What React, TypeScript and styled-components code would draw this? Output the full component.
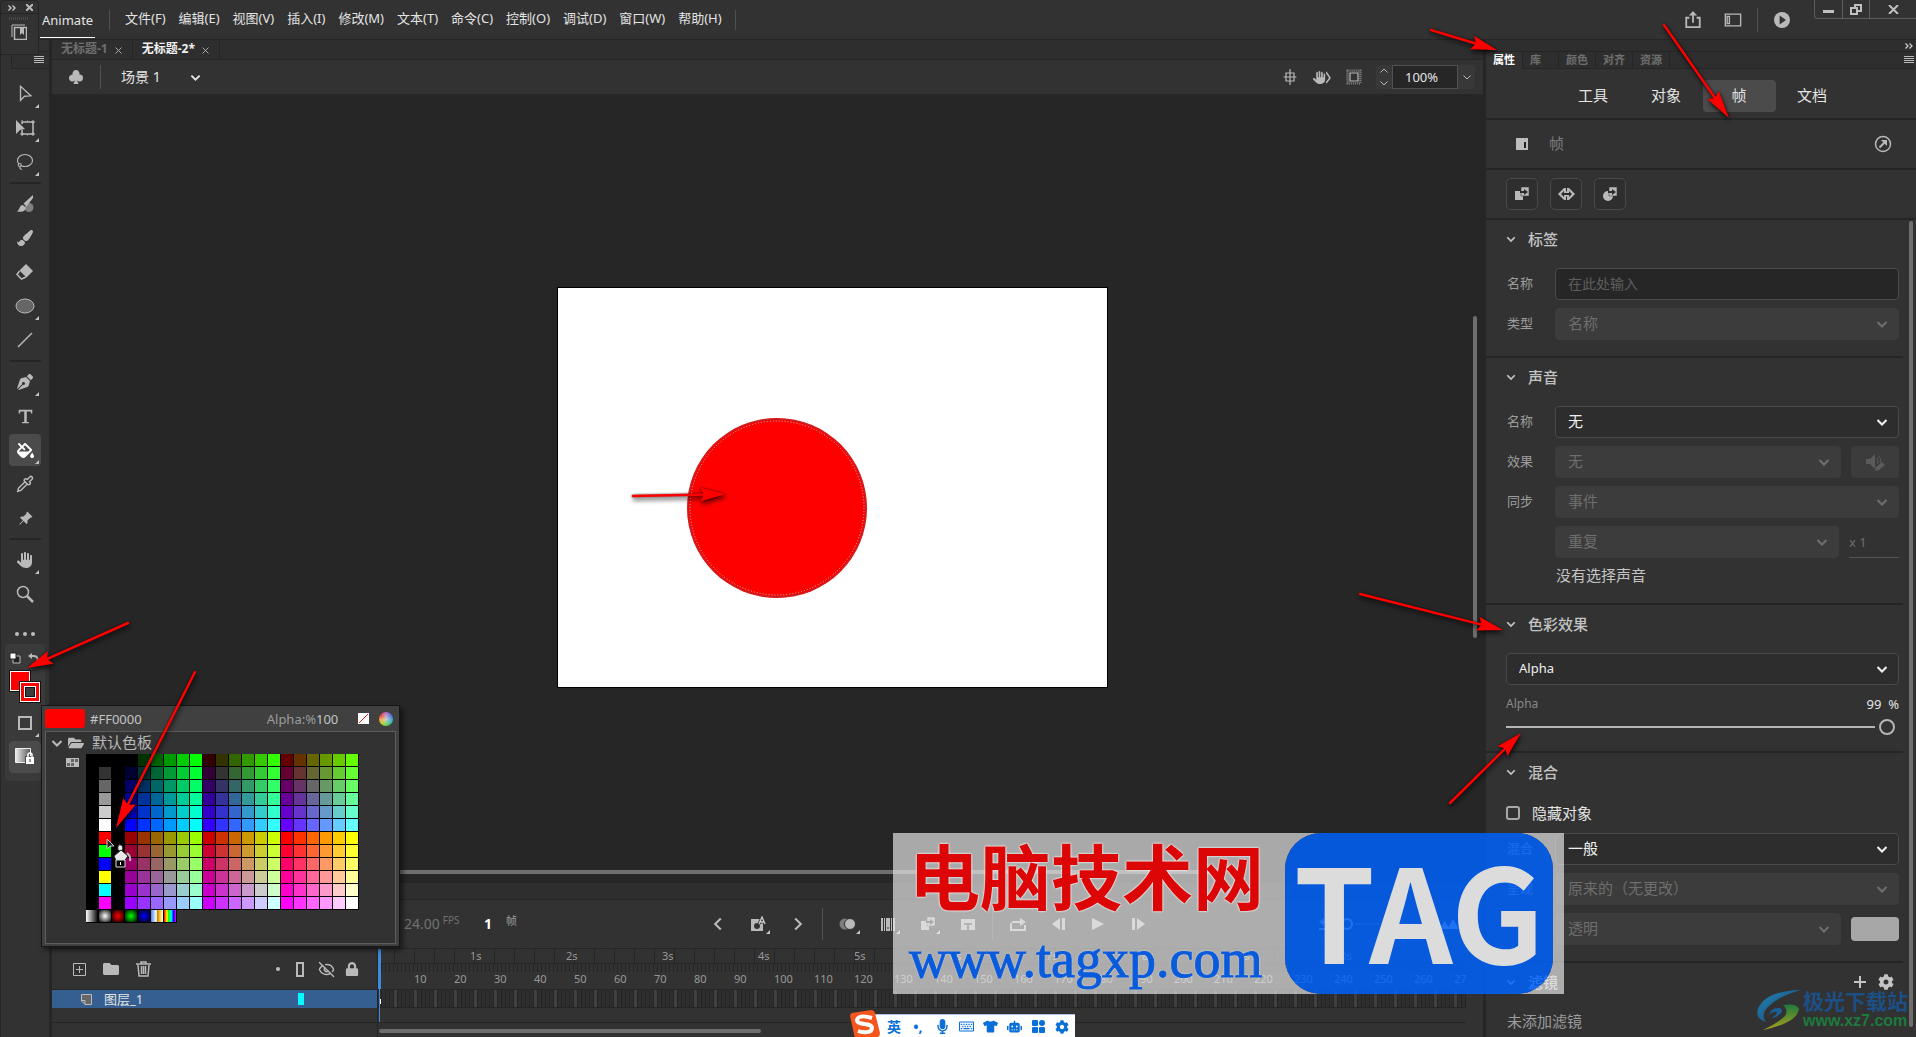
import React from "react";
import styled, { createGlobalStyle, css } from "styled-components";
import { EyeOff, Lasso, Pipette } from "lucide-react";
import {
  FaFolder, FaFolderOpen, FaLock, FaCog, FaPenNib, FaPaintBrush, FaFillDrip,
  FaMicrophone, FaTshirt, FaRegKeyboard, FaRobot,
} from "react-icons/fa";
import { FaHand } from "react-icons/fa6";
import { BsSuitClubFill, BsPinAngleFill } from "react-icons/bs";

const c = {
  panel: "#323232",
  strip: "#2e2e2e",
  dark: "#262626",
  line: "#252525",
  raised: "#3c3c3c",
  active: "#4b4b4b",
  edge: "#4a4a4a",
  icon: "#b9b9b9",
  text: "#e4e4e4",
  soft: "#c4c4c4",
  label: "#9c9c9c",
  dim: "#6e6e6e",
  bar: "#6e6e6e",
  blue: "#3f8bdc",
};

const Global = createGlobalStyle`
  * { box-sizing: border-box; }
  body {
    margin: 0;
    overflow: hidden;
    background: ${c.dark};
    color: ${c.text};
    font: 13px/16px "Noto Sans", "Noto Sans CJK SC", sans-serif;
  }
  button, input, select { font: inherit; color: inherit; margin: 0; }
  button { border: 0; padding: 0; background: none; cursor: pointer; }
  svg { display: block; flex: none; }
`;

/* ---------- shared parts ---------- */

const Shell = styled.div`
  position: relative;
  display: flex;
  flex-direction: column;
  height: 100vh;
  overflow: hidden;
`;

const Body = styled.div`
  display: flex;
  flex: 1;
  gap: 3px;
  min-height: 0;
`;

const IconButton = styled.button<{ $w?: number }>`
  display: flex;
  align-items: center;
  justify-content: center;
  width: ${(p) => p.$w ?? 24}px;
  height: 24px;
  color: ${c.icon};
`;

const Rule = styled.span<{ $h?: number }>`
  width: 1px;
  height: ${(p) => p.$h ?? 22}px;
  background: #505050;
`;

const Spacer = styled.span<{ $w?: number }>`
  flex: ${(p) => (p.$w ? "none" : 1)};
  width: ${(p) => (p.$w ? `${p.$w}px` : "auto")};
`;

type IconProps = { size?: number; children?: React.ReactNode };
const Svg = ({ size = 20, children }: IconProps) => (
  <svg width={size} height={size} viewBox="0 0 20 20" fill="none" stroke="currentColor" strokeWidth="1.5" aria-hidden="true">
    {children}
  </svg>
);

const Chevron = ({ size = 12 }: IconProps) => (
  <Svg size={size}><path d="M2.500 6.500l7.500 7.500 7.500-7.500" strokeWidth="3.500" /></Svg>
);
const ThinChevron = () => (
  <svg width="8" height="5" viewBox="0 0 8 5" fill="none" stroke="currentColor" aria-hidden="true"><path d="M.5 .5L4 4 7.500 .5" /></svg>
);
const MenuLines = () => (
  <svg width="10" height="8" viewBox="0 0 10 8" aria-hidden="true">
    <path d="M0 .5h10M0 2.500h10M0 4.500h10M0 6.500h10" stroke="#bbb" />
  </svg>
);
const DoubleChevron = () => (
  <svg width="8" height="6" viewBox="0 0 8 6" fill="none" stroke="#ccc" strokeWidth="1.300" aria-hidden="true">
    <path d="M.5 .5l2.500 2.500-2.500 2.500M4.500 .5l2.500 2.500-2.500 2.500" />
  </svg>
);
const Cross = () => (
  <svg width="7" height="7" viewBox="0 0 7 7" stroke="#aaa" aria-hidden="true"><path d="M.5 .5l6 6M6.500 .5l-6 6" /></svg>
);

/* ---------- title bar ---------- */

const TopBar = styled.header`
  display: flex;
  align-items: center;
  height: 40px;
  padding-left: 40px;
  background: ${c.panel};
  border-bottom: 1px solid ${c.line};
`;

const AppName = styled.span`
  width: 55px;
  height: 32px;
  margin-top: 4px;
  padding: 6px 2px 0;
  border-bottom: 1px solid #fff;
  line-height: 16px;
  font-size: 13px;
`;

const Menu = styled.nav`
  display: flex;
  gap: 13px;
  padding: 0 13px 4px 15px;
`;

const MenuItem = styled.button`
  font-size: 13px;
  line-height: 20px;
  white-space: nowrap;
`;

const WindowButtons = styled.div`
  display: flex;
  align-self: flex-start;
  width: 102px;
  height: 19px;
  border: solid #5c5c5c;
  border-width: 0 0 1px 1px;
  border-radius: 0 0 0 4px;
`;

const WindowButton = styled.button<{ $wide?: boolean }>`
  display: flex;
  align-items: center;
  justify-content: center;
  width: ${(p) => (p.$wide ? 47 : 27)}px;
  height: 18px;
  color: #c0c0c0;
  & + & { border-left: 1px solid #5c5c5c; }
`;

const menus = ["文件(F)", "编辑(E)", "视图(V)", "插入(I)", "修改(M)", "文本(T)", "命令(C)", "控制(O)", "调试(D)", "窗口(W)", "帮助(H)"];

const TitleBar = () => (
  <TopBar>
    <AppName>Animate</AppName>
    <Spacer $w={14} />
    <Rule $h={20} />
    <Menu>{menus.map((m) => <MenuItem key={m}>{m}</MenuItem>)}</Menu>
    <Rule $h={20} />
    <Spacer />
    <IconButton aria-label="共享" $w={40}>
      <Svg size={18}><path d="M6 7.500H2.500V18h15V7.500H14M10 13V2.500" strokeWidth="2" /><path d="M5.500 5L10 0l4.500 5z" fill="currentColor" stroke="none" /></Svg>
    </IconButton>
    <IconButton aria-label="工作区" $w={40}>
      <Svg size={18}><path d="M1.500 3.500h17v13h-17z" /><path d="M3.500 6h2.500v8H3.500z" /></Svg>
    </IconButton>
    <Spacer $w={4} />
    <Rule $h={24} />
    <IconButton aria-label="测试影片" $w={48}>
      <Svg size={16}><circle cx="10" cy="10" r="10" fill="currentColor" stroke="none" /><path d="M7 4.500l8 5.500-8 5.500z" fill={c.panel} stroke="none" /></Svg>
    </IconButton>
    <Spacer $w={8} />
    <WindowButtons>
      <WindowButton aria-label="最小化"><svg width="11" height="9"><path d="M0 5h11v3H0z" fill="currentColor" /></svg></WindowButton>
      <WindowButton aria-label="还原">
        <svg width="12" height="11" fill="none" stroke="currentColor" strokeWidth="2"><path d="M1 4h6v6H1zM5 4V1h6v6H7" /></svg>
      </WindowButton>
      <WindowButton aria-label="关闭" $wide><svg width="11" height="9" stroke="currentColor" strokeWidth="2"><path d="M1 0l9 9M10 0L1 9" /></svg></WindowButton>
    </WindowButtons>
  </TopBar>
);

/* ---------- floating mini panel ---------- */

const MiniPanel = styled.aside`
  position: absolute;
  top: 0;
  left: 0;
  width: 39px;
  height: 55px;
  background: ${c.panel};
  border: 1px solid ${c.line};
  border-radius: 4px 4px 0 0;
`;

const MiniHead = styled.div`
  display: flex;
  align-items: center;
  justify-content: space-between;
  height: 13px;
  padding: 1px 5px 0 7px;
  border-bottom: 1px solid ${c.line};
`;

const MiniBody = styled.div`
  display: flex;
  flex-direction: column;
  align-items: center;
  padding: 3px 2px 0 0;
`;

const Grip = styled.span`
  width: 20px;
  height: 3px;
  background: repeating-linear-gradient(90deg, #4a4a4a 0 1px, transparent 1px 2px);
`;

/* ---------- tools ---------- */

const Tools = styled.aside`
  display: flex;
  flex-direction: column;
  align-items: center;
  width: 49px;
  background: ${c.panel};
  border-left: 1px solid ${c.line};
`;

const ToolsHead = styled.div`
  display: flex;
  align-items: center;
  justify-content: flex-end;
  align-self: stretch;
  height: 18px;
  margin: 11px 0 8px 10px;
  padding-right: 5px;
  background: #303030;
  border: solid ${c.line};
  border-width: 1px 0 1px 1px;
`;

const Tool = styled.button<{ $on?: boolean }>`
  position: relative;
  display: flex;
  align-items: center;
  justify-content: center;
  width: 32px;
  height: 32px;
  margin: 1px 0;
  border-radius: 4px;
  color: ${(p) => (p.$on ? "#fff" : c.icon)};
  background: ${(p) => (p.$on ? c.active : "transparent")};
`;

const Corner = styled.span`
  position: absolute;
  right: 2px;
  bottom: 2px;
  border: 2px solid;
  border-color: transparent #c4c4c4 #c4c4c4 transparent;
`;

const ToolRule = styled.span`
  width: 31px;
  height: 2px;
  margin: 3px 0;
  background: ${c.line};
`;

const MoreTools = styled.button`
  display: flex;
  gap: 4px;
  margin: 21px 0 8px;
`;

const Dot = styled.i`
  width: 4px;
  height: 4px;
  border-radius: 50%;
  background: #bdbdbd;
`;

const ColorBox = styled.div`
  display: flex;
  flex-direction: column;
  align-items: center;
  width: 40px;
  height: 137px;
  border-radius: 4px;
  background: #3a3a3a;
`;

const SwapRow = styled.div`
  display: flex;
  justify-content: space-between;
  align-items: center;
  align-self: stretch;
  height: 26px;
  padding: 2px 6px 0 4px;
  color: ${c.icon};
`;

const Chips = styled.div`
  position: relative;
  width: 32px;
  height: 36px;
`;

const Chip = styled.button<{ $stroke?: boolean }>`
  position: absolute;
  left: ${(p) => (p.$stroke ? 10 : 0)}px;
  top: ${(p) => (p.$stroke ? 11 : 0)}px;
  width: 22px;
  height: 22px;
  background: #f00;
  border: 1px solid #111;
  box-shadow: inset 0 0 0 1px #fff;
  ${(p) => p.$stroke && css`
    &::after {
      content: "";
      position: absolute;
      inset: 5px;
      background: ${c.raised};
      border: 1px solid #111;
      box-shadow: 0 0 0 1px #fff;
    }
  `}
`;

const toolGroups: { name: string; more?: boolean; on?: boolean; icon: React.ReactNode }[][] = [
  [
    { name: "选择", more: true, icon: <Svg size={18}><path d="M5 1.500v15.500l4.500-4.500 7-.5z" /></Svg> },
    {
      name: "任意变形", more: true,
      icon: <Svg><path d="M1 2v14l4-4 5-1z" fill="currentColor" stroke="none" /><path d="M7 4h11v12H7v-4M7 4v2" /><path d="M6 3h2M12 3h1M17 3h2v2h-2zM18 10h1M17 15h2v2h-2zM12 17h1M6 15h2v2H6z" strokeWidth="1" /></Svg>,
    },
    { name: "套索", more: true, icon: <Lasso size={18} strokeWidth={1.500} /> },
  ],
  [
    { name: "流畅画笔", icon: <Svg><circle cx="14" cy="13.500" r="4.500" fill="#808080" stroke="none" /><path d="M18 1L8.500 9.500l3 3L18 4zM8 11c-4 0-3 5-6 6.500 5 1 9-.5 8.500-4z" fill="currentColor" stroke="none" /></Svg> },
    { name: "画笔", icon: <FaPaintBrush size={16} /> },
    { name: "橡皮擦", icon: <Svg><path d="M11 2l7 7-6.500 6.500-7-7z" fill="currentColor" stroke="none" /><path d="M4.500 9L2 12.500l4.500 4.500 4.500-2" /></Svg> },
    { name: "椭圆", more: true, icon: <Svg><ellipse cx="10" cy="10" rx="9" ry="7" fill="#666" strokeWidth="1" /></Svg> },
    { name: "线条", icon: <Svg><path d="M3 17L17 3" /></Svg> },
  ],
  [
    { name: "钢笔", more: true, icon: <FaPenNib size={16} /> },
    { name: "文本", icon: <Svg size={17}><path d="M2 2h16v4.500h-1.500L16 4h-4.500v12.500H14V18H6v-1.500h2.500V4H4l-.5 2.500H2z" fill="currentColor" stroke="none" /></Svg> },
    { name: "颜料桶", more: true, on: true, icon: <FaFillDrip size={17} /> },
    { name: "滴管", icon: <Pipette size={18} strokeWidth={2} /> },
    { name: "资源变形", icon: <BsPinAngleFill size={15} /> },
  ],
  [
    { name: "手形", more: true, icon: <FaHand size={16} /> },
    { name: "缩放", icon: <Svg><circle cx="8" cy="8" r="5.500" /><path d="M12 12l6 6" strokeWidth="2.500" /></Svg> },
  ],
];

const ToolPanel = () => (
  <Tools>
    <ToolsHead><MenuLines /></ToolsHead>
    {toolGroups.map((group, i) => (
      <React.Fragment key={i}>
        {i > 0 && <ToolRule />}
        {group.map((t) => (
          <Tool key={t.name} aria-label={t.name} $on={t.on}>{t.icon}{t.more && <Corner />}</Tool>
        ))}
      </React.Fragment>
    ))}
    <MoreTools aria-label="更多工具"><Dot /><Dot /><Dot /></MoreTools>
    <ColorBox>
      <SwapRow>
        <svg width="12" height="12"><path d="M4 4h7v7H4z" fill="#222" stroke="#bbb" /><path d="M1 1h6v6H1z" fill="#fff" stroke="#222" /></svg>
        <svg width="11" height="10" fill="none" stroke="currentColor" strokeWidth="2"><path d="M2 3h4q4 0 4 6" /><path d="M4 0v6L0 3z" fill="currentColor" stroke="none" /></svg>
      </SwapRow>
      <Chips><Chip aria-label="填充颜色" /><Chip $stroke aria-label="笔触颜色" /></Chips>
      <Tool aria-label="对象绘制"><svg width="14" height="14" fill="none" stroke="currentColor" strokeWidth="2"><path d="M1 1h12v12H1z" /></svg><Corner /></Tool>
      <Tool aria-label="锁定填充" $on>
        <svg width="20" height="18">
          <defs><linearGradient id="lk"><stop offset="0" stopColor="#eee" /><stop offset="1" stopColor="#555" /></linearGradient></defs>
          <path d="M.5 .5h15v14H.5z" fill="url(#lk)" stroke="#eee" />
          <path d="M10 8h10v9H10z" fill={c.active} />
          <path d="M13 9V7a2 2 0 014 0v2" fill="none" stroke="#fff" strokeWidth="1.500" /><path d="M11 9h8v7h-8z" fill="#fff" /><path d="M14.500 11h1v3h-1z" fill="#333" />
        </svg>
      </Tool>
    </ColorBox>
  </Tools>
);

/* ---------- document area ---------- */

const Center = styled.main`
  display: flex;
  flex: 1;
  flex-direction: column;
  min-width: 0;
`;

const DocTabs = styled.div`
  display: flex;
  height: 20px;
  background: ${c.strip};
  border-bottom: 1px solid ${c.line};
`;

const DocTab = styled.div<{ $on?: boolean }>`
  display: flex;
  align-items: center;
  gap: 7px;
  padding: 0 10px 2px 9px;
  border-right: 1px solid ${c.line};
  font-size: 12px;
  font-weight: 700;
  color: ${(p) => (p.$on ? "#f0f0f0" : c.dim)};
`;

const TabClose = styled.button`
  padding-top: 3px;
`;

const DocBar = styled.div`
  display: flex;
  align-items: center;
  height: 34px;
  padding: 0 8px 0 12px;
  background: ${c.panel};
`;

const SceneSelect = styled.button`
  display: flex;
  align-items: center;
  justify-content: space-between;
  width: 80px;
  font-size: 14px;
  line-height: 20px;
`;

const Zoom = styled.div`
  display: flex;
  align-items: center;
  height: 24px;
  border-radius: 3px;
  background: #383838;
`;

const Stepper = styled.button`
  display: flex;
  flex-direction: column;
  gap: 8px;
  padding: 0 4px;
  color: ${c.icon};
  svg:first-child { transform: rotate(180deg); }
`;

const ZoomInput = styled.input`
  width: 66px;
  height: 24px;
  padding: 0 12px;
  background: ${c.dark};
  border: 1px solid #505050;
  font-size: 13px;
`;

const Workspace = styled.section`
  position: relative;
  flex: 1;
  min-height: 0;
  background: ${c.dark};
`;

const Canvas = styled.div`
  position: absolute;
  left: 505px;
  top: 193px;
  width: 551px;
  height: 401px;
  background: #fff;
  border: 1px solid #000;
`;

const Disc = styled.svg`
  position: absolute;
  left: 129px;
  top: 130px;
`;

const VBar = styled.span`
  position: absolute;
  right: 6px;
  top: 222px;
  width: 4px;
  height: 322px;
  border-radius: 2px;
  background: ${c.bar};
`;

const HBar = styled.span`
  position: absolute;
  left: 300px;
  right: 257px;
  bottom: 9px;
  height: 4px;
  border-radius: 2px;
  background: ${c.bar};
`;

/* ---------- timeline ---------- */

const TimelineBox = styled.section`
  display: flex;
  flex-direction: column;
  height: 154px;
  background: ${c.panel};
`;

const TimelineTabs = styled.div`
  display: flex;
  align-items: center;
  justify-content: flex-end;
  height: 17px;
  padding-right: 5px;
  background: ${c.strip};
  border-bottom: 1px solid ${c.line};
`;

const Controls = styled.div`
  display: flex;
  align-items: center;
  height: 49px;
  padding-left: 352px;
  border-bottom: 1px solid ${c.line};
  color: ${c.icon};
`;

const Fps = styled.span`
  display: flex;
  gap: 3px;
  width: 80px;
  color: #707070;
  font-size: 14px;
  line-height: 20px;
  sup { font-size: 10px; line-height: 12px; }
`;

const FrameNo = styled.strong`
  width: 22px;
  font-size: 14px;
  color: #fff;
`;

const FrameUnit = styled.span`
  width: 192px;
  padding-bottom: 6px;
  font-size: 11px;
  color: ${c.label};
`;

const Slot = styled.button<{ $w?: number }>`
  position: relative;
  display: flex;
  align-items: center;
  justify-content: center;
  width: ${(p) => p.$w ?? 40}px;
  height: 24px;
  color: ${c.icon};
`;

const SlotCorner = styled(Corner)`
  right: 8px;
`;

const Lower = styled.div`
  display: flex;
  flex: 1;
  min-height: 0;
`;

const Layers = styled.div`
  width: 326px;
  border-right: 1px solid ${c.line};
`;

const LayerTools = styled.div`
  display: flex;
  align-items: center;
  height: 41px;
  padding: 0 12px 0 11px;
  border-bottom: 1px solid ${c.line};
`;

const Layer = styled.div`
  display: flex;
  align-items: center;
  height: 18px;
  padding: 0 73px 0 29px;
  background: #345f90;
  font-size: 13px;
`;

const LayerName = styled.span`
  flex: 1;
  padding-left: 12px;
`;

const LayerColor = styled.span`
  width: 6px;
  height: 12px;
  background: #0ff;
`;

const LayerVoid = styled.div`
  height: 15px;
  border-bottom: 1px solid ${c.line};
`;

const Frames = styled.div`
  position: relative;
  flex: 1;
  min-width: 0;
  margin-right: 17px;
`;

const tick = (n: number) => `repeating-linear-gradient(90deg, transparent 0 ${n - 1}px, ${c.line} ${n - 1}px ${n}px)`;

const Seconds = styled.div`
  display: flex;
  height: 15px;
  padding-left: 92px;
  overflow: hidden;
  border-bottom: 1px solid ${c.line};
  background: ${tick(20)} -3px 0;
  span { flex: none; width: 96px; font-size: 11px; line-height: 14px; color: #989898; }
`;

const Numbers = styled.div`
  display: flex;
  height: 26px;
  padding: 7px 0 0 36px;
  overflow: hidden;
  border-bottom: 1px solid ${c.line};
  background: ${tick(4)} 0 0 / 100% 8px no-repeat;
  span { flex: none; width: 40px; font-size: 11px; line-height: 16px; color: #989898; }
`;

const FrameCells = styled.div`
  height: 18px;
  background:
    ${tick(4)},
    repeating-linear-gradient(90deg, #2e2e2e 0 16px, #404040 16px 20px);
  border-bottom: 1px solid ${c.line};
`;

const KeyFrame = styled.span`
  display: block;
  width: 4px;
  height: 17px;
  background: linear-gradient(#fff, #fff) 1px 9px / 2px 5px no-repeat;
`;

const Playhead = styled.span`
  position: absolute;
  left: 0;
  top: 0;
  width: 3px;
  height: 40px;
  background: ${c.blue};
  &::after {
    content: "";
    position: absolute;
    left: 1px;
    top: 40px;
    width: 1px;
    height: 33px;
    background: ${c.blue};
  }
`;

const FrameScroll = styled.span`
  display: block;
  width: 382px;
  height: 4px;
  margin: 6px 0 0 1px;
  border-radius: 2px;
  background: ${c.bar};
`;

const seconds = Array.from({ length: 11 }, (_, i) => i + 1);
const numbers = Array.from({ length: 27 }, (_, i) => (i + 1) * 10);

const TweenIcon = () => (
  <svg width="15" height="14"><path d="M0 4h8v9H0z" fill="currentColor" /><path d="M6 0h8v9H6z" fill="currentColor" stroke="#2c2c2c" strokeWidth=".5" /><path d="M5 4h4V2l4 3-4 3V6H5z" fill="#2c2c2c" /></svg>
);

const Timeline = () => (
  <TimelineBox>
    <TimelineTabs><MenuLines /></TimelineTabs>
    <Controls>
      <Fps>24.00<sup>FPS</sup></Fps>
      <FrameNo>1</FrameNo>
      <FrameUnit>帧</FrameUnit>
      <Slot aria-label="上一个"><Svg size={14}><path d="M14 2l-8 8 8 8" strokeWidth="3" /></Svg></Slot>
      <Slot aria-label="关键帧">
        <svg width="17" height="16"><path d="M1 3h12v12H1z" fill="currentColor" /><circle cx="7" cy="10" r="3" fill="#333" /><path d="M9 8l3-7 3 7M10 6h4" fill="none" stroke="#333" strokeWidth="3" /><path d="M9 8l3-7 3 7M10 6h4" fill="none" stroke="#ccc" strokeWidth="1.300" /></svg>
        <SlotCorner />
      </Slot>
      <Slot aria-label="下一个"><Svg size={14}><path d="M6 2l8 8-8 8" strokeWidth="3" /></Svg></Slot>
      <Spacer $w={4} />
      <Rule $h={32} />
      <Spacer $w={5} />
      <Slot aria-label="绘图纸外观"><svg width="18" height="12"><circle cx="6" cy="6" r="5.500" fill="#7d7d7d" /><circle cx="11" cy="6" r="5.500" fill="currentColor" stroke="#333" /></svg><SlotCorner /></Slot>
      <Slot aria-label="编辑多个帧"><svg width="14" height="13" fill="currentColor"><path d="M0 0h2v13H0zM3 0h1v13H3zM5 0h4v13H5zM10 0h1v13h-1zM12 0h2v13h-2z" /><path d="M6.500 9h1v2h-1z" fill="#333" /></svg><SlotCorner /></Slot>
      <Slot aria-label="创建传统补间"><TweenIcon /><SlotCorner /></Slot>
      <Slot aria-label="插入帧组"><svg width="14" height="11"><path d="M0 0h14v11H0z" fill="currentColor" /><path d="M3 4h8v2H8v5H6V6H3z" fill="#444" /></svg></Slot>
      <Spacer $w={4} />
      <Rule $h={32} />
      <Spacer $w={5} />
      <Slot aria-label="循环"><svg width="17" height="13" fill="none" stroke="currentColor" strokeWidth="2"><path d="M1 5v7h14V7M2 4h9" /><path d="M10 0l6 4-6 4z" fill="currentColor" stroke="none" /></svg></Slot>
      <Slot aria-label="后退一帧"><svg width="13" height="12" fill="currentColor"><path d="M8 0v12L0 6zM10 0h3v12h-3z" /></svg></Slot>
      <Slot aria-label="播放"><svg width="12" height="12" fill="currentColor"><path d="M0 0l12 6L0 12z" /></svg></Slot>
      <Slot aria-label="前进一帧"><svg width="13" height="12" fill="currentColor"><path d="M5 0v12l8-6zM0 0h3v12H0z" /></svg></Slot>
      <Spacer />
      <Slot aria-label="重置" $w={24}><svg width="16" height="12" fill="none" stroke="currentColor" strokeWidth="2"><path d="M3 4h6q4 0 4 5M0 11h16" /><path d="M5 0v8L0 4z" fill="currentColor" stroke="none" /></svg></Slot>
      <Slot aria-label="缩放时间轴" $w={124}><svg width="120" height="12" fill="none" stroke="#bbb"><circle cx="6" cy="6" r="5" strokeWidth="2" /><path d="M14 6h82" stroke="#555" strokeWidth="2" /><path d="M98 11l6-8 4 8zM106 11l6-10 6 10z" fill="#bbb" stroke="none" /></svg></Slot>
      <Spacer $w={20} />
    </Controls>
    <Lower>
      <Layers>
        <LayerTools>
          <IconButton aria-label="新建图层" $w={32}><svg width="13" height="13" fill="none" stroke="currentColor"><path d="M.5 .5h12v12H.5zM6.500 3v7M3 6.500h7" /></svg></IconButton>
          <IconButton aria-label="新建文件夹" $w={32}><FaFolder size={16} /></IconButton>
          <IconButton aria-label="删除" $w={32}><svg width="15" height="16" fill="none" stroke="currentColor" strokeWidth="1.500"><path d="M0 3h15M5 3V1h5v2M2 4l1 11h9l1-11M5.500 5v8M7.500 5v8M9.500 5v8" /></svg></IconButton>
          <Spacer />
          <Dot />
          <Spacer $w={7} />
          <IconButton aria-label="轮廓" $w={26}><svg width="8" height="15" fill="none" stroke="currentColor" strokeWidth="2"><path d="M1 1h6v13H1z" /></svg></IconButton>
          <IconButton aria-label="隐藏" $w={26}><EyeOff size={17} /></IconButton>
          <IconButton aria-label="锁定" $w={26}><FaLock size={14} /></IconButton>
        </LayerTools>
        <Layer>
          <svg width="11" height="11"><path d="M.5 .5h10v10H4L.5 7z" fill="#666" stroke="#bbb" /><path d="M.5 6.500H4v4" fill="none" stroke="#bbb" /></svg>
          <LayerName>图层_1</LayerName>
          <LayerColor />
        </Layer>
        <LayerVoid />
      </Layers>
      <Frames>
        <Seconds>{seconds.map((s) => <span key={s}>{s}s</span>)}</Seconds>
        <Numbers>{numbers.map((n) => <span key={n}>{n}</span>)}</Numbers>
        <FrameCells><KeyFrame /></FrameCells>
        <LayerVoid />
        <FrameScroll />
        <Playhead />
      </Frames>
    </Lower>
  </TimelineBox>
);

/* ---------- properties ---------- */

const PropsPanel = styled.aside`
  display: flex;
  flex-direction: column;
  width: 430px;
  background: ${c.panel};
  overflow: hidden;
`;

const Collapse = styled.div`
  display: flex;
  flex: none;
  align-items: center;
  justify-content: flex-end;
  height: 12px;
  padding-right: 3px;
  background: ${c.strip};
  border-bottom: 1px solid ${c.line};
`;

const PanelTabs = styled.div`
  display: flex;
  flex: none;
  align-items: stretch;
  height: 17px;
  padding-right: 2px;
`;

const PanelTab = styled.button<{ $on?: boolean }>`
  padding: 0 7px;
  font-size: 11px;
  line-height: 14px;
  font-weight: 700;
  text-align: left;
  min-width: 36px;
  color: ${(p) => (p.$on ? "#fff" : c.dim)};
  background: ${(p) => (p.$on ? c.panel : c.strip)};
  border-right: 1px solid ${c.line};
  border-bottom: 1px solid ${(p) => (p.$on ? c.panel : c.line)};
`;

const PanelTabRest = styled.div`
  display: flex;
  flex: 1;
  align-items: center;
  justify-content: flex-end;
  background: ${c.strip};
  border-bottom: 1px solid ${c.line};
`;

const Modes = styled.div`
  display: flex;
  flex: none;
  justify-content: center;
  height: 51px;
  padding: 11px 0 0 3px;
  border-bottom: 2px solid ${c.line};
`;

const Mode = styled.button<{ $on?: boolean }>`
  width: 73px;
  height: 32px;
  font-size: 15px;
  line-height: 28px;
  padding-bottom: 3px;
  border-radius: 4px;
  background: ${(p) => (p.$on ? c.active : "transparent")};
`;

const FrameHead = styled.div`
  display: flex;
  flex: none;
  align-items: center;
  height: 50px;
  padding: 0 24px 0 30px;
  gap: 21px;
  border-bottom: 2px solid ${c.line};
  font-size: 15px;
  color: #7c7c7c;
`;

const FrameTitle = styled.span`
  padding-bottom: 2px;
`;

const ActionRow = styled.div`
  display: flex;
  flex: none;
  gap: 12px;
  height: 50px;
  padding: 8px 20px;
  border-bottom: 2px solid ${c.line};
`;

const Action = styled.button`
  display: flex;
  align-items: center;
  justify-content: center;
  width: 32px;
  height: 32px;
  border: 1px solid ${c.edge};
  border-radius: 5px;
  background: ${c.strip};
  color: ${c.icon};
`;

const Sections = styled.div`
  display: flex;
  flex: 1;
  min-height: 0;
  overflow: hidden;
`;

const SectionList = styled.div`
  flex: 1;
`;

const ScrollBar = styled.span`
  width: 4px;
  height: 806px;
  margin: 1px 3px 0 6px;
  border-radius: 2px;
  background: ${c.bar};
`;

const Section = styled.section`
  display: flex;
  flex-direction: column;
  gap: 8px;
  padding: 0 4px 16px 20px;
  border-bottom: 2px solid ${c.line};
`;

const SectionHead = styled.h2`
  display: flex;
  align-items: center;
  gap: 12px;
  height: 38px;
  margin: 0 0 2px;
  padding-right: 5px;
  font-size: 15px;
  font-weight: 500;
  color: ${c.soft};
`;

const SectionTitle = styled.span`
  flex: 1;
`;

const Row = styled.div`
  display: flex;
  align-items: center;
  gap: 10px;
`;

const Label = styled.label`
  width: 39px;
  padding: 0 0 3px 1px;
  font-size: 13px;
  color: ${c.label};
`;

const field = css`
  width: 100%;
  height: 32px;
  padding: 0 12px 2px;
  border: 1px solid ${c.edge};
  border-radius: 4px;
  font-size: 15px;
  outline: 0;
`;

const Text = styled.input`
  ${field}
  flex: 1;
  background: ${c.dark};
  font-size: 14px;
  &::placeholder { color: #5e5e5e; opacity: 1; }
`;

const SelectBox = styled.div<{ $off?: boolean }>`
  position: relative;
  flex: 1;
  color: ${(p) => (p.$off ? c.dim : "#f0f0f0")};
  svg { position: absolute; right: 11px; top: 10px; pointer-events: none; }
`;

const Select = styled.select<{ $latin?: boolean }>`
  ${field}
  appearance: none;
  opacity: 1;
  font-size: ${(p) => (p.$latin ? 13 : 15)}px;
  background: #2d2d2d;
  &:disabled { color: ${c.dim}; background: ${c.raised}; border-color: ${c.raised}; opacity: 1; }
`;

const Pick = ({ id, value, off, latin }: { id: string; value: string; off?: boolean; latin?: boolean }) => (
  <SelectBox $off={off}>
    <Select id={id} disabled={off} $latin={latin} aria-label={value}><option>{value}</option></Select>
    <Chevron size={12} />
  </SelectBox>
);

const SoundEdit = styled.button`
  display: flex;
  align-items: center;
  justify-content: center;
  width: 48px;
  height: 32px;
  border-radius: 4px;
  background: ${c.raised};
  color: #5b5b5b;
`;

const Repeat = styled.input`
  width: 50px;
  height: 32px;
  padding: 0;
  border: 0;
  border-bottom: 1px solid #555;
  background: none;
  color: ${c.dim};
  font-size: 13px;
`;

const Note = styled.p`
  margin: 0 0 3px 50px;
  font-size: 15px;
  line-height: 18px;
  color: ${c.soft};
`;

const SliderHead = styled.div`
  display: flex;
  justify-content: space-between;
  height: 18px;
  padding-top: 3px;
  font-size: 12px;
  color: #888;
  output { color: ${c.text}; font-size: 13px; }
`;

const Slider = styled.input`
  appearance: none;
  width: 100%;
  height: 16px;
  margin: 0;
  background: linear-gradient(#b5b5b5, #b5b5b5) 0 7px / calc(100% - 24px) 2px no-repeat;
  &::-webkit-slider-thumb {
    appearance: none;
    width: 16px;
    height: 16px;
    border: 2px solid #b5b5b5;
    border-radius: 50%;
    background: ${c.panel};
  }
`;

const CheckRow = styled.label`
  display: flex;
  align-items: center;
  gap: 12px;
  height: 24px;
  font-size: 15px;
  color: ${c.text};
`;

const Check = styled.input`
  appearance: none;
  width: 14px;
  height: 14px;
  border: 2px solid #a8a8a8;
  border-radius: 3px;
`;

const Swatch = styled.button`
  width: 48px;
  height: 24px;
  border-radius: 4px;
  background: #a7a7a7;
`;

const Empty = styled.p`
  margin: 0;
  padding-left: 1px;
  font-size: 15px;
  line-height: 20px;
  color: ${c.label};
`;

const Head = ({ title, children }: { title: string; children?: React.ReactNode }) => (
  <SectionHead><Chevron size={10} /><SectionTitle>{title}</SectionTitle>{children}</SectionHead>
);

const Properties = () => (
  <PropsPanel>
    <Collapse><DoubleChevron /></Collapse>
    <PanelTabs>
      {["属性", "库", "颜色", "对齐", "资源"].map((t, i) => <PanelTab key={t} $on={i === 0}>{t}</PanelTab>)}
      <PanelTabRest><MenuLines /></PanelTabRest>
    </PanelTabs>
    <Modes>
      {["工具", "对象", "帧", "文档"].map((t) => <Mode key={t} $on={t === "帧"}>{t}</Mode>)}
    </Modes>
    <FrameHead>
      <svg width="12" height="12"><path d="M0 0h12v12H0z" fill="#bdbdbd" /><path d="M8 4h2v6H8z" fill="#222" /></svg>
      <FrameTitle>帧</FrameTitle>
      <Spacer />
      <svg width="18" height="18" fill="none" stroke="#b9b9b9" strokeWidth="1.500"><circle cx="9" cy="9" r="7.500" /><path d="M5.500 12.500l6-6" strokeWidth="2" /><path d="M7 5h6v6z" fill="#b9b9b9" stroke="none" /></svg>
    </FrameHead>
    <ActionRow>
      <Action aria-label="创建传统补间"><TweenIcon /></Action>
      <Action aria-label="创建补间动画"><svg width="17" height="12"><path d="M6 0h5l6 6-6 6H6L0 6z" fill="currentColor" /><path d="M8.500 0v3.500M8.500 8.500V12" stroke="#2c2c2c" /><path d="M3 6l3-3v2h5V3l3 3-3 3V7H6v2z" fill="#2c2c2c" /></svg></Action>
      <Action aria-label="创建形状补间"><svg width="15" height="14"><circle cx="5" cy="9" r="5" fill="currentColor" /><path d="M6 0h8v9H6z" fill="currentColor" stroke="#2c2c2c" strokeWidth=".5" /><path d="M5 4h4V2l4 3-4 3V6H5z" fill="#2c2c2c" /></svg></Action>
    </ActionRow>
    <Sections>
      <SectionList>
        <Section>
          <Head title="标签" />
          <Row><Label htmlFor="name">名称</Label><Text id="name" placeholder="在此处输入" /></Row>
          <Row><Label htmlFor="type">类型</Label><Pick id="type" value="名称" off /></Row>
        </Section>
        <Section>
          <Head title="声音" />
          <Row><Label htmlFor="snd">名称</Label><Pick id="snd" value="无" /></Row>
          <Row>
            <Label htmlFor="fx">效果</Label><Pick id="fx" value="无" off />
            <SoundEdit aria-label="编辑声音封套" disabled>
              <svg width="19" height="17" fill="currentColor"><path d="M0 5h4l5-5v15L4 10H0z" /><path d="M11 4q2 3 0 6M13 2q3 4 1 7" fill="none" stroke="currentColor" /><path d="M16 8l3 3-6 5-4 1 1-4z" /></svg>
            </SoundEdit>
          </Row>
          <Row><Label htmlFor="sync">同步</Label><Pick id="sync" value="事件" off /></Row>
          <Row><Label htmlFor="rep" aria-label="重复" /><Pick id="rep" value="重复" off /><Repeat aria-label="次数" defaultValue="x 1" disabled /></Row>
          <Note>没有选择声音</Note>
        </Section>
        <Section>
          <Head title="色彩效果" />
          <Pick id="effect" value="Alpha" latin />
          <SliderHead><label htmlFor="alpha">Alpha</label><output htmlFor="alpha">99 &nbsp;%</output></SliderHead>
          <Slider id="alpha" type="range" min="0" max="100" defaultValue="99" />
        </Section>
        <Section>
          <Head title="混合" />
          <CheckRow><Check type="checkbox" />隐藏对象</CheckRow>
          <Row><Label htmlFor="blend">混合</Label><Pick id="blend" value="一般" /></Row>
          <Row><Label htmlFor="render">呈现</Label><Pick id="render" value="原来的（无更改）" off /></Row>
          <Row><Label htmlFor="trans" aria-label="背景" /><Pick id="trans" value="透明" off /><Swatch aria-label="背景颜色" /></Row>
        </Section>
        <Section>
          <Head title="滤镜">
            <svg width="12" height="12" stroke="currentColor" strokeWidth="2" aria-hidden="true"><path d="M6 0v12M0 6h12" /></svg>
            <FaCog size={16} />
          </Head>
          <Empty>未添加滤镜</Empty>
        </Section>
      </SectionList>
      <ScrollBar />
    </Sections>
  </PropsPanel>
);

/* ---------- colour popup ---------- */

const Popup = styled.div`
  position: absolute;
  left: 41px;
  top: 705px;
  width: 359px;
  height: 242px;
  padding: 0 3px 3px;
  background: #404040;
  border: 1px solid #161616;
  box-shadow: 3px 3px 5px rgba(0, 0, 0, 0.5);
`;

const PopupHead = styled.div`
  display: flex;
  align-items: center;
  height: 25px;
  padding-right: 3px;
  color: ${c.soft};
`;

const Current = styled.span`
  width: 40px;
  height: 19px;
  margin-right: 5px;
  border-radius: 3px;
  background: #f00;
`;

const HexInput = styled.input`
  width: 130px;
  padding: 0;
  border: 0;
  background: none;
  font-size: 13px;
`;

const AlphaLabel = styled.label`
  flex: 1;
  text-align: right;
  color: ${c.label};
`;

const AlphaInput = styled.input`
  width: 42px;
  padding: 0;
  border: 0;
  background: none;
  font-size: 13px;
`;

const PopupBody = styled.div`
  height: 213px;
  background: ${c.panel};
  border: 1px solid #5c5c5c;
`;

const Folder = styled.div`
  display: flex;
  align-items: center;
  gap: 5px;
  height: 22px;
  padding-left: 5px;
  font-size: 15px;
  color: ${c.icon};
  span { padding: 0 0 2px 3px; }
`;

const PaletteRow = styled.div`
  display: flex;
  gap: 7px;
  padding-left: 20px;
`;

const Palette = styled.div`
  display: grid;
  grid-template-columns: repeat(21, 12px);
  grid-auto-rows: 12px;
  gap: 1px;
  padding: 0 1px 1px 0;
  background: #000;
`;

const Gradients = styled.div`
  display: grid;
  grid-template-columns: repeat(7, 12px);
  grid-auto-rows: 12px;
  gap: 1px;
  width: 91px;
  padding: 0 1px 1px 0;
  background: #000;
`;

const hex = (n: number) => (n * 51).toString(16).padStart(2, "0");
const greys = ["#000", "#333", "#666", "#999", "#ccc", "#fff", "#f00", "#0f0", "#00f", "#ff0", "#0ff", "#f0f"];
const swatches = Array.from({ length: 12 * 21 }, (_, i) => {
  const row = Math.floor(i / 21);
  const col = i % 21;
  if (col === 1) return greys[row];
  if (col < 3) return "#000";
  const r = Math.floor((col - 3) / 6) + (row > 5 ? 3 : 0);
  return `#${hex(r)}${hex((col - 3) % 6)}${hex(row % 6)}`;
});
const gradients = [
  "linear-gradient(90deg,#fff,#000)",
  "radial-gradient(#fff,#000)",
  "radial-gradient(#f00,#000)",
  "radial-gradient(#0f0,#000)",
  "radial-gradient(#00f,#000)",
  "linear-gradient(90deg,#48e,#fff 45%,#b70 50%,#fc3 75%,#fff)",
  "linear-gradient(90deg,#f00,#ff0 25%,#0f0 40%,#0ff 60%,#00f 80%,#f0f)",
];

const Wheel = styled.span`
  width: 14px;
  height: 14px;
  margin-left: 10px;
  border-radius: 50%;
  background: radial-gradient(#ccc, transparent 70%), conic-gradient(#b6c, #46d, #2ad, #3c6, #9d2, #fa2, #e33, #b6c);
`;

const ColourPopup = () => (
  <Popup>
    <PopupHead>
      <Current />
      <HexInput aria-label="颜色值" defaultValue="#FF0000" />
      <AlphaLabel htmlFor="pa">Alpha:%</AlphaLabel>
      <AlphaInput id="pa" defaultValue="100" />
      <svg width="11" height="11"><path d="M0 0h11v11H0z" fill="#fff" /><path d="M1 10l9-9" stroke="#d22" /></svg>
      <Wheel />
    </PopupHead>
    <PopupBody>
      <Folder><Chevron size={12} /><FaFolderOpen size={16} /><span>默认色板</span></Folder>
      <PaletteRow>
        <svg width="13" height="14"><path d="M0 4h13v9H0z" fill="#bbb" /><path d="M1 9h3v3H1zM5 5h3v3H5zM5 9h3v3H5zM9 5h3v3H9z" fill="#666" /></svg>
        <div>
          <Palette>{swatches.map((s, i) => <button key={i} aria-label={s} style={{ background: s }} />)}</Palette>
          <Gradients>{gradients.map((g) => <button key={g} aria-label="渐变" style={{ background: g }} />)}</Gradients>
        </div>
      </PaletteRow>
    </PopupBody>
  </Popup>
);

/* ---------- overlays ---------- */

const Ink = styled.svg`
  position: absolute;
  left: 0;
  top: 0;
  pointer-events: none;
  g { filter: drop-shadow(0 0 1px rgba(0, 0, 0, 0.6)) drop-shadow(1px 3px 2px rgba(0, 0, 0, 0.6)); }
`;

const arrows = [
  [1431, 30, 1497, 50, 26],
  [1664, 25, 1729, 118, 28],
  [1360, 594, 1503, 630, 26],
  [1450, 803, 1521, 733, 26],
  [128, 623, 27, 668, 26],
  [195, 672, 116, 828, 30],
  [633, 496, 726, 494, 26],
];

const Arrows = () => (
  <Ink width="1916" height="1037">
    {arrows.map(([x1, y1, x2, y2, len], i) => {
      const d = Math.hypot(x2 - x1, y2 - y1);
      const ux = (x2 - x1) / d;
      const uy = (y2 - y1) / d;
      const at = (back: number, side: number) => `${x2 - ux * back - uy * side},${y2 - uy * back + ux * side}`;
      return (
        <g key={i}>
          <line x1={x1} y1={y1} x2={x2 - ux * 18} y2={y2 - uy * 18} stroke="#f00" strokeWidth="2.500" strokeLinecap="round" />
          <polygon points={[at(0, 0), at(len, 7), at(len - 4, 0), at(len, -7)].join(" ")} fill="#f00" />
        </g>
      );
    })}
  </Ink>
);

const Cursor = styled.svg`
  position: absolute;
  left: 106px;
  top: 838px;
  pointer-events: none;
`;

const Mark = styled.div`
  position: absolute;
  left: 893px;
  top: 833px;
  display: flex;
  justify-content: space-between;
  width: 671px;
  height: 161px;
  padding: 0 11px 0 16px;
`;

const MarkPlate = styled.svg`
  position: absolute;
  inset: 0;
  z-index: -1;
`;

const MarkLayer = styled(Mark)`
  isolation: isolate;
`;

const MarkTitle = styled.div`
  height: 94px;
  font: 700 71px/80px "Noto Sans CJK SC", sans-serif;
  color: #dd0606;
  text-shadow: 0 0 2px #fff, 0 0 2px #fff;
  white-space: nowrap;
`;

const MarkUrl = styled.div`
  font: 54px/64px "Liberation Serif", serif;
  color: #0a5bdc;
  -webkit-text-stroke: 1px #0a5bdc;
  text-shadow: 0 0 2px #fff;
`;

const MarkLogo = styled.div`
  width: 268px;
  height: 161px;
  color: #dcdcdc;
  font: 700 130px/148px "Noto Sans CJK SC", sans-serif;
  text-align: center;
`;

const Watermark = () => (
  <MarkLayer>
    <MarkPlate width="671" height="161" aria-hidden="true">
      <path
        fillRule="evenodd"
        fill="rgba(234,234,234,.67)"
        d="M0 0h671v161H0zM428 0h196a36 36 0 0136 36v89a36 36 0 01-36 36H428a36 36 0 01-36-36V36a36 36 0 0136-36z"
      />
      <rect x="392" width="268" height="161" rx="36" fill="rgba(0,99,255,.83)" />
    </MarkPlate>
    <div>
      <MarkTitle>电脑技术网</MarkTitle>
      <MarkUrl>www.tagxp.com</MarkUrl>
    </div>
    <MarkLogo>TAG</MarkLogo>
  </MarkLayer>
);

const Ime = styled.div`
  position: absolute;
  left: 872px;
  top: 1014px;
  display: flex;
  align-items: center;
  width: 203px;
  height: 24px;
  padding-left: 10px;
  background: #fff;
  border-top: 1px solid #a9c4e8;
`;

const ImeKey = styled.button`
  display: flex;
  align-items: center;
  justify-content: center;
  width: 24px;
  font-size: 14px;
  font-weight: 700;
  color: #0a6fd8;
`;

const ImeLogo = styled.svg`
  position: absolute;
  left: 849px;
  top: 1010px;
`;

const Site = styled.div`
  position: absolute;
  right: 8px;
  bottom: 7px;
  display: flex;
  align-items: flex-end;
  gap: 2px;
`;

const SiteName = styled.div`
  font: 700 21px/24px "Noto Sans CJK SC", sans-serif;
  color: #1b4f86;
`;

const SiteUrl = styled.div`
  font: 700 16px/18px "Liberation Sans", sans-serif;
  color: #1d7a3c;
`;

export default function App() {
  return (
    <Shell>
      <Global />
      <TitleBar />
      <Body>
        <ToolPanel />
        <Center>
          <DocTabs>
            <DocTab>无标题-1<TabClose aria-label="关闭"><Cross /></TabClose></DocTab>
            <DocTab $on>无标题-2*<TabClose aria-label="关闭"><Cross /></TabClose></DocTab>
          </DocTabs>
          <DocBar>
            <IconButton aria-label="场景"><BsSuitClubFill size={16} /></IconButton>
            <Spacer $w={12} />
            <Rule $h={24} />
            <Spacer $w={20} />
            <SceneSelect>场景 1<Chevron size={11} /></SceneSelect>
            <Spacer />
            <IconButton aria-label="居中" $w={32}><Svg size={16}><path d="M10 0v20M2 10h16" /><path d="M5 5h10v10H5z" /></Svg></IconButton>
            <IconButton aria-label="旋转" $w={32}>
              <FaHand size={13} />
              <svg width="5" height="14" fill="none" stroke="currentColor" strokeWidth="1.500"><path d="M0 2l4 6-4 5" /></svg>
            </IconButton>
            <IconButton aria-label="剪切" $w={32}><Svg size={16}><path d="M2 2h16v16H2z" stroke="#777" strokeWidth="3" strokeDasharray="1.500 1" /><path d="M5 5h10v10H5z" /></Svg></IconButton>
            <Spacer $w={6} />
            <Zoom>
              <Stepper aria-label="调整缩放"><ThinChevron /><ThinChevron /></Stepper>
              <ZoomInput aria-label="缩放" defaultValue="100%" />
              <IconButton aria-label="缩放列表" $w={17}><ThinChevron /></IconButton>
            </Zoom>
          </DocBar>
          <Workspace>
            <Canvas>
              <Disc width="180" height="180">
                <circle cx="90" cy="90" r="90" fill="#f00" />
                <circle cx="90" cy="90" r="89" fill="none" stroke="#4a6a6a" strokeWidth="1" strokeDasharray="1 1" />
                <circle cx="90" cy="90" r="87" fill="none" stroke="#9cc" strokeWidth="1" strokeDasharray="1 2" />
              </Disc>
            </Canvas>
            <VBar />
            <HBar />
          </Workspace>
          <Timeline />
        </Center>
        <Properties />
      </Body>
      <MiniPanel>
        <MiniHead><DoubleChevron /><svg width="7" height="7" stroke="#bbb" strokeWidth="2"><path d="M0 0l7 7M7 0L0 7" /></svg></MiniHead>
        <MiniBody>
          <Grip />
          <IconButton aria-label="库"><svg width="16" height="16" fill="none" stroke="currentColor"><path d="M3.500 3.500h12v12h-12z" strokeWidth="1.500" /><path d="M1 13V1h13" /><path d="M9 4h4v7l-2-2-2 2z" fill="currentColor" stroke="none" /></svg></IconButton>
        </MiniBody>
      </MiniPanel>
      <ColourPopup />
      <Cursor width="28" height="32">
        <path d="M1 1v10l3-3h4z" fill="#222" stroke="#ccc" />
        <path d="M12 12q-1-6 3-5 3 1 1 6M8 18l7-6 7 6-5 7h-6z" fill="#e8e8e8" stroke="#222" />
        <path d="M21 15q4 3 3 8" fill="none" stroke="#bbb" strokeWidth="2" />
        <path d="M10 22h9v7h-9z" fill="#000" stroke="#ddd" /><path d="M14 24h1v3h-1z" fill="#fff" />
      </Cursor>
      <Arrows />
      <Watermark />
      <Ime>
        <ImeKey>英</ImeKey>
        <ImeKey>•,</ImeKey>
        <ImeKey aria-label="语音"><FaMicrophone size={15} /></ImeKey>
        <ImeKey aria-label="键盘"><FaRegKeyboard size={15} /></ImeKey>
        <ImeKey aria-label="皮肤"><FaTshirt size={15} /></ImeKey>
        <ImeKey aria-label="助手"><FaRobot size={15} /></ImeKey>
        <ImeKey aria-label="工具箱"><svg width="13" height="13" fill="currentColor"><rect width="6" height="6" rx="1" /><rect x="7" width="6" height="6" rx="3" /><rect y="7" width="6" height="6" rx="1" /><rect x="7" y="7" width="6" height="6" rx="1" /></svg></ImeKey>
        <ImeKey aria-label="设置"><FaCog size={14} /></ImeKey>
      </Ime>
      <ImeLogo width="31" height="27" viewBox="0 0 31 27">
        <path d="M1 6q0-2 2-3L22 0q3 0 4 3l5 20q0 3-2 4H7q-2 0-2-3z" fill="#f4561e" />
        <path d="M23 8Q10 4 8 10c0 6 15 2 15 8 0 5-9 5-14 3" fill="none" stroke="#fff" strokeWidth="4" />
      </ImeLogo>
      <Site>
        <svg width="44" height="41" viewBox="0 0 44 41">
          <defs>
            <linearGradient id="g1" y2="1"><stop stopColor="#1f86a8" /><stop offset="1" stopColor="#1b3f86" /></linearGradient>
            <linearGradient id="g2" x2="0" y2="1"><stop stopColor="#1d7a3c" /><stop offset="1" stopColor="#a8a020" /></linearGradient>
          </defs>
          <path d="M44 1Q8 2 1 20q-3 10 8 13-6-8 3-16Q22 7 44 1z" fill="url(#g1)" />
          <path d="M26 16q14-2 16 4-2 14-36 21 16-8 22-14 4-6-2-11z" fill="url(#g2)" />
          <path d="M12 26q2-8 11-7 4 2 0 6-4 4-9 4 6-3 6-6-4-1-8 3z" fill="#1b5f96" />
        </svg>
        <div><SiteName>极光下载站</SiteName><SiteUrl>www.xz7.com</SiteUrl></div>
      </Site>
    </Shell>
  );
}
